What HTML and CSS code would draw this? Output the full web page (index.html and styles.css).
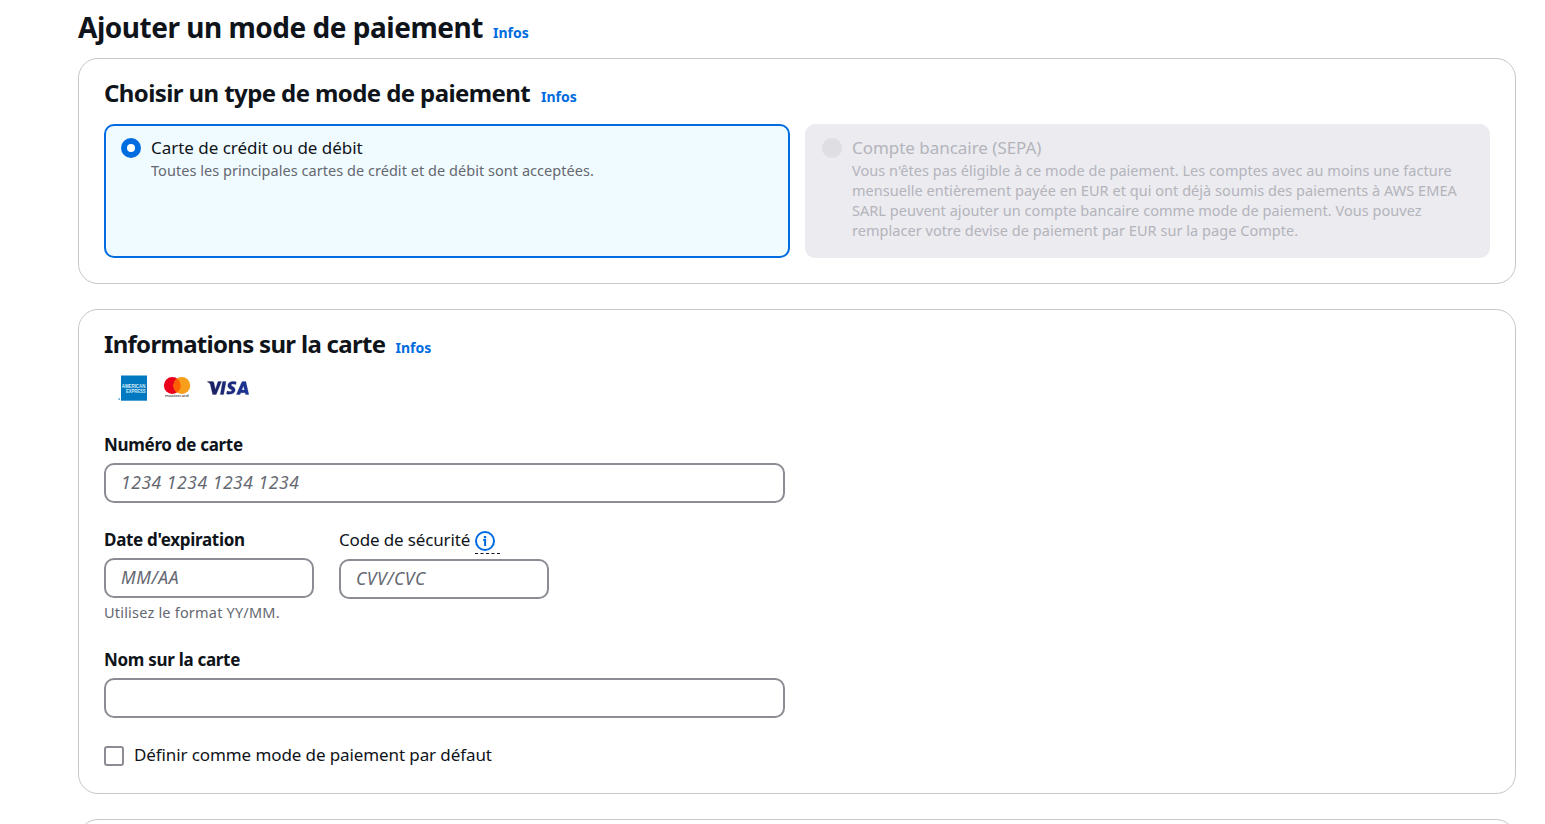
FILE: index.html
```html
<!DOCTYPE html>
<html lang="fr">
<head>
<meta charset="utf-8">
<title>Ajouter un mode de paiement</title>
<link rel="stylesheet" href="styles.css">
</head>
<body>
<main class="page">
  <header class="page-header">
    <h1 class="page-title">Ajouter un mode de paiement</h1>
    <a class="info-link">Infos</a>
  </header>

  <section class="panel">
    <div class="panel-header">
      <h2 class="panel-title title-type">Choisir un type de mode de paiement</h2>
      <a class="info-link">Infos</a>
    </div>
    <div class="tiles">
      <label class="tile tile-selected">
        <span class="radio radio-checked"></span>
        <span class="tile-body">
          <span class="tile-label">Carte de crédit ou de débit</span>
          <span class="tile-text">Toutes les principales cartes de crédit et de débit sont acceptées.</span>
        </span>
      </label>
      <label class="tile tile-disabled">
        <span class="radio radio-disabled"></span>
        <span class="tile-body">
          <span class="tile-label">Compte bancaire (SEPA)</span>
          <span class="tile-text">Vous n'êtes pas éligible à ce mode de paiement. Les comptes avec au moins une facture<br>mensuelle entièrement payée en EUR et qui ont déjà soumis des paiements à AWS EMEA<br>SARL peuvent ajouter un compte bancaire comme mode de paiement. Vous pouvez<br>remplacer votre devise de paiement par EUR sur la page Compte.</span>
        </span>
      </label>
    </div>
  </section>

  <section class="panel">
    <div class="panel-header">
      <h2 class="panel-title title-card">Informations sur la carte</h2>
      <a class="info-link">Infos</a>
    </div>
    <div class="brands">
      <svg class="brand" width="31" height="28" viewBox="0 0 31 28" aria-label="American Express">
        <rect x="4" y="1.5" width="26" height="25.2" fill="#0079c1"/>
        <rect x="1.3" y="24.2" width="1.8" height="1.8" fill="#6bb3dc"/>
        <text class="amex" x="4.8" y="14" textLength="23.5" lengthAdjust="spacingAndGlyphs">AMERICAN</text>
        <text class="amex" x="9" y="19.3" textLength="19.5" lengthAdjust="spacingAndGlyphs">EXPRESS</text>
      </svg>
      <svg class="brand" width="28" height="28" viewBox="0 0 28 28" aria-label="Mastercard">
        <circle cx="9.3" cy="11.5" r="8.4" fill="#eb001b"/>
        <circle cx="18.8" cy="11.5" r="8.4" fill="#f79e1b"/>
        <path d="M14.05 4.6a8.4 8.4 0 0 1 0 13.8a8.4 8.4 0 0 1 0-13.8z" fill="#ff5f00"/>
        <text class="mc" x="2" y="23.3" textLength="23.5" lengthAdjust="spacingAndGlyphs">mastercard</text>
      </svg>
      <svg class="brand" width="42" height="28" viewBox="0 0 42 28" aria-label="Visa">
        <defs><linearGradient id="visa" x1="0" x2="1"><stop offset="0" stop-color="#1c1f5c"/><stop offset="1" stop-color="#1b3598"/></linearGradient></defs>
        <path transform="translate(.4 .3)" stroke="url(#visa)" stroke-width=".3" fill="url(#visa)" d="M.2 7.3h4.9c.7 0 1.2.3 1.4 1.1l1.5 6.9 2.6-8h3.5L8.8 20.2H5.3L2.9 10.1C2.5 8.9 1.5 8.2.1 7.7zM15.3 7.3h3.3l-2.4 12.9h-3.3zM28.9 7.6l-.5 2.6c-1.6-.6-4.5-.9-4.6.5 0 1.3 4.2 1.8 4 5-.2 3.7-4.4 4.7-8.7 3.9l.6-2.8c2.1.7 4.6.7 4.7-.5.1-1.4-4.2-1.7-4-5 .1-4 4.9-4.9 8.5-3.7zM35.6 7.3h2.8l3 12.9h-3.2l-.4-1.8h-4.4l-.8 1.8h-3.6l5.2-11.9c.3-.7.7-1 1.4-1zm.5 4.2-1.7 4.3h2.7z"/>
      </svg>
    </div>

    <div class="field">
      <label class="field-label" for="number">Numéro de carte</label>
      <input class="input" id="number" placeholder="1234 1234 1234 1234">
    </div>

    <div class="field-row">
      <div class="field field-short">
        <label class="field-label" for="expiry">Date d'expiration</label>
        <input class="input" id="expiry" placeholder="MM/AA">
        <span class="hint">Utilisez le format YY/MM.</span>
      </div>
      <div class="field field-short">
        <label class="field-label label-code" for="code"><span class="code-text">Code de sécurité</span><span class="code-info"><svg width="20" height="20" viewBox="0 0 20 20" fill="none" stroke="#006ce0" stroke-width="2"><circle cx="10" cy="10" r="9"/><path d="M8.2 9.1h1.9v5.9" stroke-width="2"/><path d="M10 5v2.3" stroke-width="2.4"/></svg></span></label>
        <input class="input" id="code" placeholder="CVV/CVC">
      </div>
    </div>

    <div class="field">
      <label class="field-label" for="name">Nom sur la carte</label>
      <input class="input" id="name">
    </div>

    <label class="check">
      <span class="check-box"></span>
      <span class="check-label">Définir comme mode de paiement par défaut</span>
    </label>
  </section>

  <section class="panel panel-next"></section>
</main>
</body>
</html>
```

FILE: styles.css
```css
* { box-sizing: border-box; }

html { overflow: hidden; }

body {
  margin: 0;
  height: 824px;
  overflow: hidden;
  background: #fff;
  color: #0f141a;
  font-family: "Noto Sans", "Open Sans", sans-serif;
  font-size: 17px;
}

.page {
  width: 1438px;
  height: 824px;
  margin-left: 78px;
  padding-top: 8px;
  overflow: hidden;
}

.page-header, .panel-header {
  display: flex;
  align-items: baseline;
  gap: 10px;
  white-space: nowrap;
}

.page-header { height: 40px; margin-bottom: 10px; }

.page-title {
  margin: 0;
  width: 405px;
  font-size: 28px;
  line-height: 38px;
  font-weight: 700;
  letter-spacing: -0.48px;
}

.panel-header { height: 30px; }

.panel-title {
  margin: 0;
  font-size: 24px;
  line-height: 28px;
  font-weight: 700;
  letter-spacing: -0.6px;
}

.title-type { width: 427px; }
.title-card { width: 281.5px; letter-spacing: -0.7px; }

.info-link {
  color: #006ce0;
  font-size: 14px;
  line-height: 20px;
  font-weight: 700;
}

.panel {
  border: 1px solid #c6c6cd;
  border-radius: 20px;
  padding: 20px 25px 25px;
  margin-bottom: 25px;
}

.panel-next { height: 80px; margin-bottom: 0; }

.tiles {
  display: grid;
  grid-template-columns: 686px 685px;
  gap: 15px;
  margin-top: 15px;
}

.tile {
  display: flex;
  gap: 10px;
  height: 134px;
  padding: 10px 15px;
  border: 2px solid;
  border-radius: 10px;
}

.tile-selected { border-color: #006ce0; background: #f0fbff; }
.tile-disabled { border-color: #ebebf0; background: #ebebf0; color: #b4b4bb; }

.radio {
  flex: none;
  width: 20px;
  height: 20px;
  margin-top: 2px;
  border-radius: 50%;
}

.radio-checked { background: #fff; border: 6px solid #006ce0; }
.radio-disabled { background: #dedee3; }

.tile-body { display: flex; flex-direction: column; white-space: nowrap; }
.tile-label { height: 24px; line-height: 23px; letter-spacing: -0.03px; }
.tile-text { font-size: 14.5px; line-height: 20px; letter-spacing: 0.04px; }
.tile-selected .tile-text { color: #656871; }

.brands {
  display: flex;
  height: 28px;
  margin: 14px 0 31px 13px;
}

.brand + .brand { margin-left: 15px; }
.brand + .brand + .brand { margin-left: 16px; }
.amex { font: 700 5px "Liberation Sans", sans-serif; fill: #d5eaf6; }
.mc { font: 400 4.2px "Liberation Sans", sans-serif; fill: #222; }

.field {
  display: flex;
  flex-direction: column;
  width: 681px;
  margin-bottom: 25px;
}

.field-row { display: flex; gap: 25px; }
.field-short { width: 210px; }

.field-label {
  height: 25px;
  margin-bottom: 5px;
  line-height: 23px;
  font-weight: 700;
  letter-spacing: -0.3px;
  white-space: nowrap;
}

.label-code {
  display: flex;
  height: 26px;
  font-weight: 400;
  letter-spacing: -0.15px;
}

.code-text { width: 136px; }

.code-info {
  width: 25px;
  height: 26px;
  padding-top: 3px;
  line-height: 0;
  border-bottom: 1px dashed #0f141a;
}

.input {
  width: 100%;
  height: 40px;
  padding: 0 15px 2px;
  border: 2px solid #8c8c94;
  border-radius: 10px;
  background: #fff;
  font: 400 17.5px "Noto Sans", "Open Sans", sans-serif;
  letter-spacing: 0.55px;
}

.input::placeholder { color: #656871; font-style: italic; opacity: 1; }

.hint {
  height: 21px;
  margin-top: 4px;
  color: #656871;
  font-size: 14.5px;
  line-height: 20px;
  letter-spacing: 0.2px;
}

.check { display: flex; gap: 10px; height: 25px; }

.check-box {
  width: 20px;
  height: 20px;
  margin-top: 3px;
  border: 2px solid #8c8c94;
  border-radius: 3px;
}

.check-label { line-height: 23px; letter-spacing: -0.1px; }
```
